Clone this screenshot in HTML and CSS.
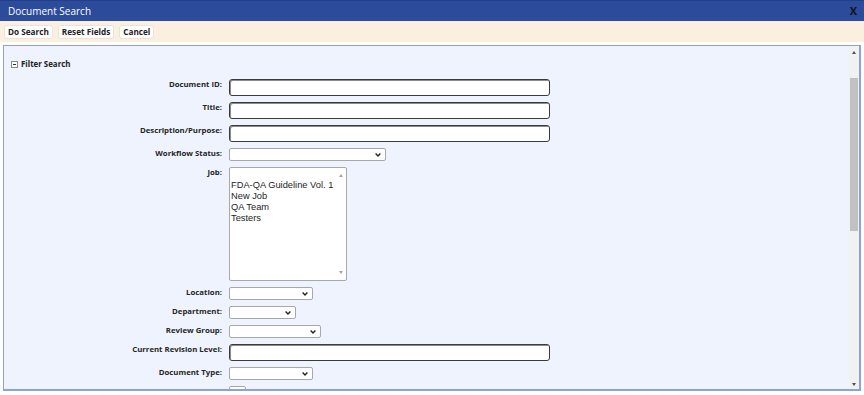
FILE: index.html
```html
<!DOCTYPE html>
<html>
<head>
<meta charset="utf-8">
<title>Document Search</title>
<link rel="stylesheet" href="styles.css">
</head>
<body>
<div class="titlebar">
  <span class="title">Document Search</span>
  <span class="close">X</span>
</div>
<div class="toolbar">
  <button class="btn">Do Search</button>
  <button class="btn">Reset Fields</button>
  <button class="btn">Cancel</button>
</div>
<div class="panel">
  <div class="content">
    <div class="section-head">
      <svg class="toggle" width="7" height="7" viewBox="0 0 7 7"><rect x="0.5" y="0.5" width="6" height="6" fill="#fff" stroke="#8a8a8a"/><line x1="2" y1="3.5" x2="5" y2="3.5" stroke="#333"/></svg>
      <span>Filter Search</span>
    </div>
    <div class="form">
      <label class="lbl">Document ID:</label>
      <input class="txt" type="text">

      <label class="lbl">Title:</label>
      <input class="txt" type="text">

      <label class="lbl">Description/Purpose:</label>
      <input class="txt" type="text">

      <label class="lbl">Workflow Status:</label>
      <div class="sel w-157"><svg class="chev" width="6" height="4" viewBox="0 0 6 4"><polyline points="0.6,0.6 3,3 5.4,0.6" fill="none" stroke="#222" stroke-width="1.4"/></svg></div>

      <label class="lbl">Job:</label>
      <div class="listbox">
        <div class="opts">
          <div class="opt">&nbsp;</div>
          <div class="opt">FDA-QA Guideline Vol. 1</div>
          <div class="opt">New Job</div>
          <div class="opt">QA Team</div>
          <div class="opt">Testers</div>
        </div>
        <div class="lscroll">
          <span class="tri tri-up"></span>
          <span class="tri tri-down"></span>
        </div>
      </div>

      <label class="lbl">Location:</label>
      <div class="sel w-84"><svg class="chev" width="6" height="4" viewBox="0 0 6 4"><polyline points="0.6,0.6 3,3 5.4,0.6" fill="none" stroke="#222" stroke-width="1.4"/></svg></div>

      <label class="lbl">Department:</label>
      <div class="sel w-67"><svg class="chev" width="6" height="4" viewBox="0 0 6 4"><polyline points="0.6,0.6 3,3 5.4,0.6" fill="none" stroke="#222" stroke-width="1.4"/></svg></div>

      <label class="lbl">Review Group:</label>
      <div class="sel w-92"><svg class="chev" width="6" height="4" viewBox="0 0 6 4"><polyline points="0.6,0.6 3,3 5.4,0.6" fill="none" stroke="#222" stroke-width="1.4"/></svg></div>

      <label class="lbl">Current Revision Level:</label>
      <input class="txt" type="text">

      <label class="lbl">Document Type:</label>
      <div class="sel w-84"><svg class="chev" width="6" height="4" viewBox="0 0 6 4"><polyline points="0.6,0.6 3,3 5.4,0.6" fill="none" stroke="#222" stroke-width="1.4"/></svg></div>

      <label class="lbl">Miscellaneous:</label>
      <div class="sel w-17"><svg class="chev" width="6" height="4" viewBox="0 0 6 4"><polyline points="0.6,0.6 3,3 5.4,0.6" fill="none" stroke="#222" stroke-width="1.4"/></svg></div>
    </div>
  </div>
  <div class="vscroll">
    <span class="tri tri-up dark"></span>
    <div class="thumb"></div>
    <div class="spacer"></div>
    <span class="tri tri-down dark"></span>
  </div>
</div>
</body>
</html>
```

FILE: styles.css
```css
html, body {
  margin: 0;
  padding: 0;
}
body {
  width: 864px;
  height: 395px;
  overflow: hidden;
  background: #ffffff;
  font-family: "Open Sans", "Noto Sans", sans-serif;
}

.titlebar {
  box-sizing: border-box;
  height: 21px;
  background: #2d4b9b;
  border-top: 1px solid #233f8a;
  display: flex;
  align-items: center;
  justify-content: space-between;
  padding: 0 7px 0 8px;
}
.title {
  color: #ffffff;
  font-size: 10px;
  line-height: 12px;
}
.close {
  color: #111111;
  font-weight: 700;
  font-size: 11px;
  line-height: 12px;
}

.toolbar {
  height: 21px;
  background: #fbf0df;
  display: flex;
  align-items: center;
  gap: 5px;
  padding-left: 4px;
}
.btn {
  box-sizing: border-box;
  height: 14px;
  margin: 1px 0 0;
  padding: 0 3px;
  border: 1px solid #ebe3d5;
  border-radius: 3px;
  background: #ffffff;
  font-family: "Open Sans", "Noto Sans", sans-serif;
  font-weight: 700;
  font-size: 8.2px;
  line-height: 12px;
  color: #222222;
}

.panel {
  box-sizing: border-box;
  margin: 3px 3px 0;
  height: 346px;
  border: 1px solid #8ea2d6;
  border-right-width: 2px;
  border-bottom-width: 2px;
  background: #eef3fd;
  display: flex;
}
.content {
  flex: 1;
  overflow: hidden;
  padding-top: 12px;
}
.section-head {
  height: 13px;
  display: flex;
  align-items: center;
  gap: 3px;
  padding-left: 7px;
  margin-bottom: 8px;
  font-weight: 700;
  font-size: 7.9px;
  line-height: 13px;
  color: #222222;
}
.toggle {
  display: block;
}

.form {
  display: grid;
  grid-template-columns: 218px max-content;
  column-gap: 7px;
  row-gap: 6px;
  align-items: start;
}
.lbl {
  text-align: right;
  font-weight: 700;
  font-size: 7.8px;
  line-height: 11px;
  color: #262626;
  white-space: nowrap;
}
.txt {
  display: block;
  box-sizing: border-box;
  width: 321px;
  height: 17px;
  margin: 0;
  padding: 0;
  border: 1px solid #3a3a3a;
  border-radius: 3px;
  box-shadow: inset 1px 1px 0 #8c8c8c;
  background: #ffffff;
}
.sel {
  box-sizing: border-box;
  height: 13px;
  border: 1px solid #a8a8a8;
  border-radius: 2px;
  background: #ffffff;
  display: flex;
  align-items: center;
  justify-content: flex-end;
  padding-right: 4px;
}
.chev {
  display: block;
}
.w-157 { width: 157px; }
.w-84 { width: 84px; }
.w-67 { width: 67px; }
.w-92 { width: 92px; }
.w-17 { width: 17px; }

.listbox {
  box-sizing: border-box;
  width: 118px;
  height: 114px;
  border: 1px solid #a8a8a8;
  border-radius: 2px;
  background: #ffffff;
  display: flex;
}
.opts {
  flex: 1;
  padding: 1px 0 0 1px;
  font-family: "Liberation Sans", Arial, sans-serif;
  font-size: 9.3px;
  line-height: 11px;
  color: #1e1e1e;
}
.opt {
  height: 11px;
  white-space: nowrap;
}
.lscroll {
  width: 10px;
  display: flex;
  flex-direction: column;
  align-items: center;
  justify-content: space-between;
  padding: 6px 0 6px;
}

.tri {
  display: block;
  width: 0;
  height: 0;
  border-left: 2.5px solid transparent;
  border-right: 2.5px solid transparent;
}
.tri-up {
  border-bottom: 3px solid #a3a3a3;
}
.tri-down {
  border-top: 3px solid #a3a3a3;
}
.tri-up.dark {
  border-bottom-color: #505050;
}
.tri-down.dark {
  border-top-color: #505050;
}

.vscroll {
  width: 10px;
  background: #f1f1f1;
  display: flex;
  flex-direction: column;
  align-items: center;
}
.vscroll .tri-up {
  margin-top: 5px;
}
.thumb {
  width: 8px;
  height: 153px;
  margin-top: 24px;
  background: #c1c1c1;
}
.spacer {
  flex: 1;
}
.vscroll .tri-down {
  margin-bottom: 3px;
}
```
